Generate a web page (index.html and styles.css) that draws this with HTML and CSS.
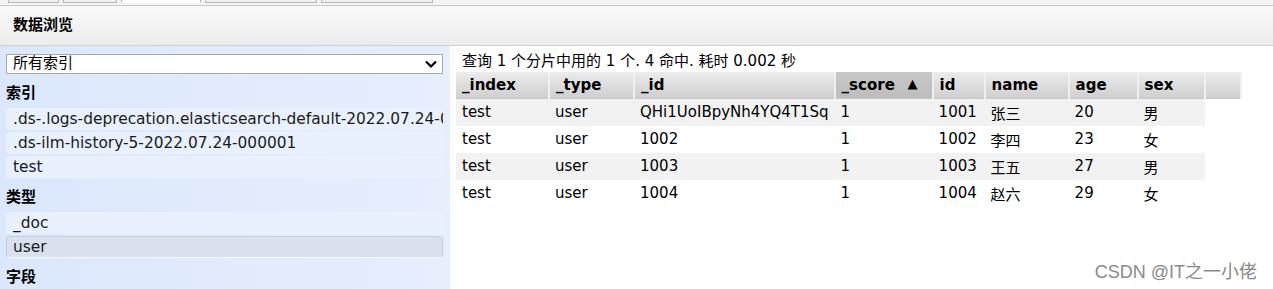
FILE: index.html
```html
<!DOCTYPE html>
<html lang="zh">
<head>
    <meta charset="UTF-8" />
    <title>数据浏览</title>
    <link rel="stylesheet" href="styles.css">
</head>
<body>

    <!-- Tabs (cut off at top) -->
    <div class="tabs">
        <div class="tab t1">概览</div>
        <div class="tab t2">索引</div>
        <div class="tab t3 active">数据浏览</div>
        <div class="tab t4">基本查询 <span class="blue">[+]</span></div>
        <div class="tab t5">复合查询 <span class="blue">[+]</span></div>
    </div>

    <!-- Header -->
    <div class="header">数据浏览</div>

    <div class="main">
        <!-- Sidebar -->
        <div class="sidebar">
            <div class="select">
                <span class="select-text">所有索引</span>
                <svg width="14" height="10" viewBox="0 0 14 10"><path d="M2 2.5 L7 7.5 L12 2.5" fill="none" stroke="#000" stroke-width="2.2"/></svg>
            </div>
            <div class="side-title">索引</div>
            <div class="item">.ds-.logs-deprecation.elasticsearch-default-2022.07.24-000001</div>
            <div class="item">.ds-ilm-history-5-2022.07.24-000001</div>
            <div class="item">test</div>
            <div class="side-title">类型</div>
            <div class="item">_doc</div>
            <div class="item selected">user</div>
            <div class="side-title">字段</div>
        </div>

        <!-- Results -->
        <div class="content">
            <div class="summary">查询 1 个分片中用的 1 个. 4 命中. 耗时 0.002 秒</div>
            <table class="results">
                <thead>
                    <tr>
                        <th class="c-index">_index</th>
                        <th class="c-type">_type</th>
                        <th class="c-id">_id</th>
                        <th class="c-score sorted">_score <span class="arrow">▲</span></th>
                        <th class="c-uid">id</th>
                        <th class="c-name">name</th>
                        <th class="c-age">age</th>
                        <th class="c-sex">sex</th>
                        <th class="c-pad"></th>
                    </tr>
                </thead>
                <tbody>
                    <tr class="odd">
                        <td>test</td><td>user</td><td>QHi1UoIBpyNh4YQ4T1Sq</td><td>1</td><td>1001</td><td>张三</td><td>20</td><td>男</td><td class="empty"></td>
                    </tr>
                    <tr>
                        <td>test</td><td>user</td><td>1002</td><td>1</td><td>1002</td><td>李四</td><td>23</td><td>女</td><td class="empty"></td>
                    </tr>
                    <tr class="odd">
                        <td>test</td><td>user</td><td>1003</td><td>1</td><td>1003</td><td>王五</td><td>27</td><td>男</td><td class="empty"></td>
                    </tr>
                    <tr>
                        <td>test</td><td>user</td><td>1004</td><td>1</td><td>1004</td><td>赵六</td><td>29</td><td>女</td><td class="empty"></td>
                    </tr>
                </tbody>
            </table>
            <div class="watermark">CSDN @IT之一小佬</div>
        </div>
    </div>

</body>
</html>
```

FILE: styles.css
```css
body {
    margin: 0;
    padding: 0;
    font-family: "DejaVu Sans", "Noto Sans CJK SC", sans-serif;
    font-size: 14px;
    color: #000;
    background: #fff;
    overflow: hidden;
}

/* Tabs */
.tabs {
    height: 5px;
    overflow: hidden;
    display: flex;
    gap: 4px;
    padding-left: 8px;
    background: #f4f4f4;
}

.tab {
    height: 20px;
    margin-top: -17px;
    box-sizing: border-box;
    border: 1px solid #b8b8b8;
    background: #efefef;
    font-size: 14px;
    line-height: 18px;
    padding: 0 10px;
    text-align: center;
    white-space: nowrap;
    overflow: hidden;
}

.tab.active {
    background: #fff;
    border-bottom-color: #fff;
}

.t1 { width: 51px; }
.t2 { width: 54px; }
.t3 { width: 80px; }
.t4 { width: 112px; }
.t5 { width: 112px; }

.blue {
    color: #0000ff;
}

/* Header */
.header {
    height: 39px;
    line-height: 39px;
    padding-left: 13px;
    font-weight: bold;
    font-size: 15px;
    background: linear-gradient(#f9f9f9, #ececec);
    border-top: 1px solid #c8c8c8;
    border-bottom: 1px solid #d0d0d0;
}

.main {
    display: flex;
    height: 245px;
}

/* Sidebar */
.sidebar {
    width: 450px;
    box-sizing: border-box;
    padding: 8px 7px 0 6px;
    background: linear-gradient(to right, #dbe7fc, #e7effd);
    overflow: hidden;
}

.select {
    height: 20px;
    box-sizing: border-box;
    border: 1px solid #a9a9a9;
    background: #fff;
    display: flex;
    align-items: center;
    justify-content: space-between;
    padding: 0 4px 0 6px;
    margin-bottom: 2px;
    font-size: 15px;
}

.select-text {
    line-height: 18px;
    margin-top: -3px;
}

.side-title {
    font-weight: bold;
    font-size: 15px;
    height: 32px;
    line-height: 18px;
    padding-top: 8px;
    box-sizing: border-box;
}

.item {
    height: 22px;
    line-height: 22px;
    margin-bottom: 2px;
    padding-left: 7px;
    border-radius: 4px;
    background: #e9f1fe;
    color: #1a1a1a;
    white-space: nowrap;
    overflow: hidden;
    font-size: 15.4px;
}

.item.selected {
    background: #d9e2ee;
    border: 1px solid #c3cddb;
    border-bottom-color: #f4f7fb;
    box-sizing: border-box;
    line-height: 20px;
    padding-left: 6px;
}

/* Results */
.content {
    flex: 1;
    position: relative;
    padding: 6px 0 0 6px;
}

.summary {
    padding-left: 6px;
    height: 20px;
    line-height: 19px;
    font-size: 15px;
}

.results {
    border-collapse: collapse;
    table-layout: fixed;
}

.results th {
    height: 26px;
    box-sizing: border-box;
    padding: 0 6px;
    text-align: left;
    font-weight: bold;
    font-size: 15px;
    background: linear-gradient(#ececec, #cfcfcf);
    border-right: 2px solid #f0f0f0;
    border-bottom: 1px solid #c6c6c6;
}

.results th.sorted {
    background: linear-gradient(#c8c8c8, #bdbdbd);
}

.arrow {
    font-size: 13px;
    float: right;
    margin-right: 8px;
}

.results td {
    height: 27px;
    padding: 0 6px;
    font-size: 15px;
    white-space: nowrap;
    overflow: hidden;
}

.results tr.odd td {
    background: #f2f2f2;
}

.results tr td.empty {
    background: #fff;
}

.c-index { width: 93px; }
.c-type { width: 85px; }
.c-id { width: 199px; }
.c-score { width: 98px; }
.c-uid { width: 52px; }
.c-name { width: 84px; }
.c-age { width: 69px; }
.c-sex { width: 67px; }
.c-pad { width: 36px; }

.watermark {
    position: absolute;
    right: 16px;
    bottom: 8px;
    font-family: "Liberation Sans", "Noto Sans CJK SC", sans-serif;
    font-size: 18px;
    color: #8a8a8a;
    text-shadow: 0 1px 1px #fff;
}
```
